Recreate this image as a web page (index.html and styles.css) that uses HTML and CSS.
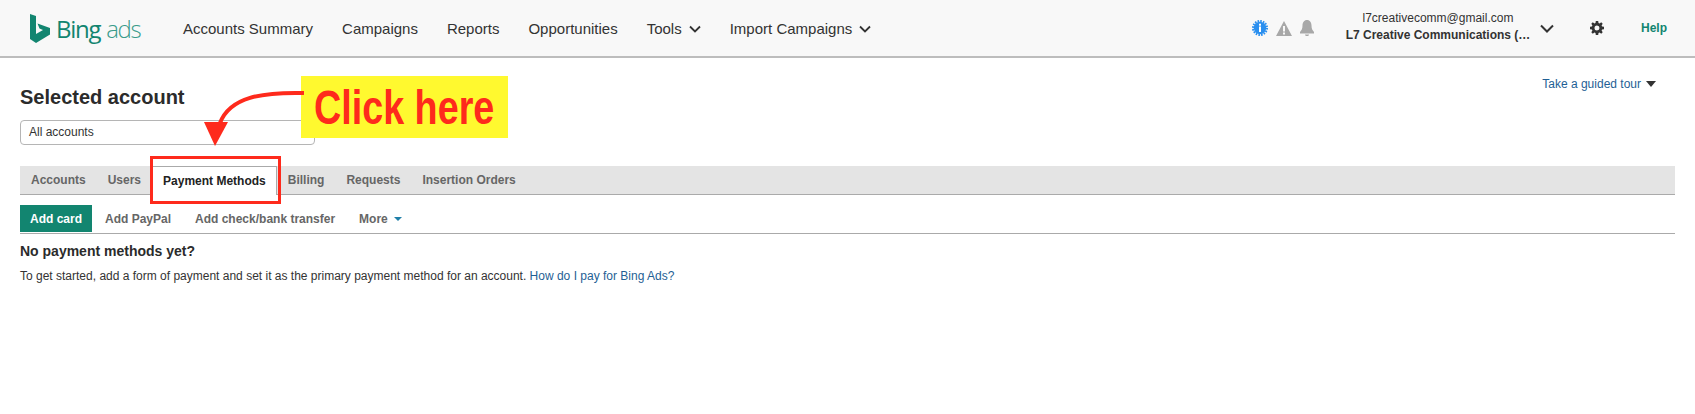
FILE: index.html
```html
<!DOCTYPE html>
<html lang="en">
<head>
<meta charset="utf-8">
<title>Bing Ads</title>
<link rel="stylesheet" href="styles.css">
</head>
<body>
<header class="topbar">
  <div class="brand">
    <svg class="brand-mark" viewBox="0 0 20 29" width="20" height="29"><path d="M0 0l6 2v18l7-4-3.500-1.600L7.500 9.500 20 14v6.500L6 29l-6-4z" fill="#128570"/></svg>
    <span class="brand-bing">Bing</span><span class="brand-ads">ads</span>
  </div>
  <nav class="mainnav">
    <a>Accounts Summary</a>
    <a>Campaigns</a>
    <a>Reports</a>
    <a>Opportunities</a>
    <a class="has-chev">Tools <svg class="chev" viewBox="0 0 12 8" width="12" height="8"><path d="M1 1.500l5 5 5-5" fill="none" stroke="#333" stroke-width="1.800"/></svg></a>
    <a class="has-chev">Import Campaigns <svg class="chev" viewBox="0 0 12 8" width="12" height="8"><path d="M1 1.500l5 5 5-5" fill="none" stroke="#333" stroke-width="1.800"/></svg></a>
  </nav>
  <div class="status-icons">
    <svg viewBox="0 0 16 16" width="16" height="16"><circle cx="8" cy="8" r="6.200" fill="#2a8fef"/><circle cx="8" cy="8" r="7" fill="none" stroke="#2a8fef" stroke-width="2" stroke-dasharray="1.600 1.150"/><rect x="7" y="3.700" width="2" height="2" fill="#fff"/><rect x="7" y="6.500" width="2" height="5.500" fill="#fff"/></svg>
    <svg viewBox="0 0 16 15" width="16" height="15"><path d="M8 0l8 15H0z" fill="#a8a8a8"/><rect x="7" y="5" width="2" height="5.500" fill="#f8f8f8"/><rect x="7" y="11.500" width="2" height="2" fill="#f8f8f8"/></svg>
    <svg viewBox="0 0 14 16" width="14" height="16"><path d="M7 0c3 0 4.500 2.500 4.500 5.500 0 3 .8 4.500 2.500 6.500v1.500H0V12c1.700-2 2.500-3.500 2.500-6.500C2.500 2.500 4 0 7 0zM5 14.500h4C9 15.500 8 16 7 16s-2-.5-2-1.500z" fill="#a8a8a8"/></svg>
  </div>
  <div class="account">
    <div class="account-mail">l7creativecomm@gmail.com</div>
    <div class="account-name">L7 Creative Communications (…</div>
  </div>
  <svg class="account-chev" viewBox="0 0 14 9" width="14" height="9"><path d="M1 1.500l6 6 6-6" fill="none" stroke="#333" stroke-width="2"/></svg>
  <svg class="gear" viewBox="0 0 14 14" width="14" height="14"><path fill-rule="evenodd" d="M5.800 0h2.400l.3 1.900 1.100.5L11.200 1.300l1.500 1.500-1.100 1.600.5 1.100 1.900.3v2.400l-1.900.3-.5 1.100 1.100 1.600-1.500 1.500-1.600-1.100-1.100.5-.3 1.900H5.800l-.3-1.900-1.100-.5-1.600 1.100-1.500-1.500 1.100-1.600-.5-1.100L0 8.200V5.800l1.900-.3.5-1.100-1.100-1.600 1.500-1.500 1.600 1.100 1.100-.5zM7 4.500a2.500 2.500 0 1 0 0 5 2.500 2.500 0 0 0 0-5z" fill="#333"/></svg>
  <a class="help">Help</a>
</header>

<main class="content">
  <div class="account-row">
    <div class="account-picker">
      <h1>Selected account</h1>
      <div class="select">All accounts</div>
    </div>
    <a class="tour">Take a guided tour <span class="tour-caret"></span></a>
  </div>

  <div class="tabs">
    <a>Accounts</a>
    <a>Users</a>
    <a class="active">Payment Methods</a>
    <a>Billing</a>
    <a>Requests</a>
    <a>Insertion Orders</a>
  </div>

  <div class="toolbar">
    <a class="primary">Add card</a>
    <a>Add PayPal</a>
    <a>Add check/bank transfer</a>
    <a>More <span class="more-caret"></span></a>
  </div>

  <h2>No payment methods yet?</h2>
  <p>To get started, add a form of payment and set it as the primary payment method for an account. <a class="link">How do I pay for Bing Ads?</a></p>
</main>

<div class="callout"><span class="callout-text">Click here</span></div>
<div class="highlight"></div>
<svg class="arrow" viewBox="0 0 120 80" width="120" height="80">
  <path d="M104 10C62 9 30 14 20 40" fill="none" stroke="#fe2a1c" stroke-width="4"/>
  <path d="M4 39h24L15 63z" fill="#fe2a1c"/>
</svg>
</body>
</html>
```
FILE: styles.css
```css
* { box-sizing: border-box; }
html, body { margin: 0; padding: 0; }
body {
  position: relative;
  width: 1695px;
  height: 414px;
  overflow: hidden;
  background: #fff;
  font-family: "Liberation Sans", Arial, sans-serif;
  color: #333;
}
a { text-decoration: none; color: inherit; }

.topbar {
  display: flex;
  align-items: center;
  height: 58px;
  background: #f8f8f8;
  border-bottom: 2px solid #bdbdbd;
  padding-left: 30px;
}
.brand { display: flex; align-items: center; width: 153px; }
.brand-mark { margin-right: 6px; }
.brand-bing { font-family: "Open Sans", sans-serif; font-size: 24px; color: #128570; margin-right: 6px; letter-spacing: -1.300px; }
.brand-ads { font-family: "Open Sans", sans-serif; font-weight: 300; font-size: 24px; color: #3a9c8b; letter-spacing: -1.300px; }
.mainnav { display: flex; align-items: center; gap: 29px; font-size: 15px; color: #333; padding-top: 1px; }
.has-chev { display: flex; align-items: center; gap: 7px; }
.status-icons { margin-left: auto; display: flex; align-items: center; gap: 8px; }
.account { width: 186px; margin-left: 31px; text-align: center; font-size: 12px; line-height: 17px; margin-top: -2px; }
.account-mail { color: #333; }
.account-name { font-weight: 700; white-space: nowrap; }
.account-chev { margin-left: 9px; }
.gear { margin-left: 36px; }
.help { margin-left: 37px; margin-right: 28px; font-size: 12px; font-weight: 700; color: #128570; }

.content { padding: 0 20px 0 20px; }
.account-row { display: flex; justify-content: space-between; align-items: flex-start; height: 108px; }
.account-picker { padding-top: 26px; }
h1 { margin: 0 0 10px; font-size: 20px; line-height: 26px; font-weight: 700; color: #2b2b2b; }
.select {
  width: 295px; height: 25px; padding-left: 8px;
  border: 1px solid #b5b5b5; border-radius: 4px;
  font-size: 12px; line-height: 23px; color: #333;
}
.tour { display: flex; align-items: center; gap: 5px; margin-top: 19px; margin-right: 19px; font-size: 12px; color: #1f5f95; }
.tour-caret { width: 0; height: 0; border: 5.500px solid transparent; border-top: 6px solid #333; border-bottom: 0; }

.tabs {
  display: flex; align-items: stretch;
  height: 29px; background: #e4e4e4;
  border-bottom: 1px solid #aaa;
  padding-left: 11px;
  font-size: 12px; font-weight: 700; color: #666;
}
.tabs a { display: flex; align-items: center; margin-right: 22px; }
.tabs a.active {
  margin: 0 11px 0 -11px; padding: 0 10px;
  background: #fff; color: #222;
  border: 1px solid #aaa; border-bottom: 0;
  height: 29px;
}
.toolbar {
  display: flex; align-items: flex-start; gap: 24px;
  height: 29px; margin-top: 10px;
  border-bottom: 1px solid #aaa;
  font-size: 12px; font-weight: 700; color: #666;
}
.toolbar a { display: flex; align-items: center; gap: 6px; height: 27px; }
.toolbar .primary {
  width: 72px; justify-content: center;
  margin-right: -11px;
  background: #128570; color: #fff;
}
.more-caret { width: 0; height: 0; border: 4px solid transparent; border-top: 4px solid #1f7fa8; border-bottom: 0; }
h2 { margin: 8px 0 0; font-size: 14px; line-height: 18px; font-weight: 700; color: #2b2b2b; }
p { margin: 8px 0 0; font-size: 12px; line-height: 16px; color: #333; }
.link { color: #1f5f95; }

.callout {
  position: absolute; left: 301px; top: 76px;
  display: flex; align-items: center; justify-content: center;
  width: 207px; height: 62px;
  background: #fff92f; color: #fe2a1c;
  font-size: 49px; font-weight: 700; line-height: 62px;
  white-space: nowrap;
}
.callout-text { display: inline-block; transform: scaleX(0.77); }
.highlight {
  position: absolute; left: 150px; top: 156px;
  width: 131px; height: 48px;
  border: 3px solid #fe2a1c;
}
.arrow { position: absolute; left: 200px; top: 83px; }
```
